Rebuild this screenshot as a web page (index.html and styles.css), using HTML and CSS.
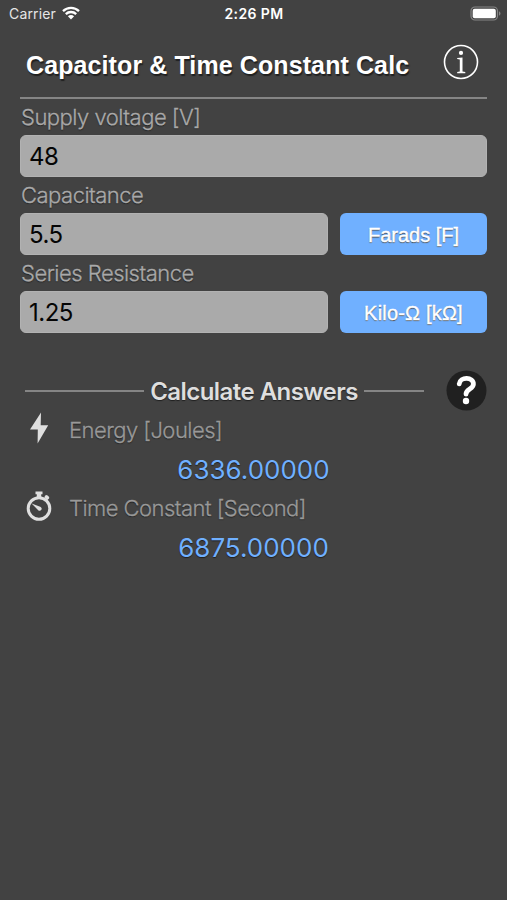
FILE: index.html
```html
<!DOCTYPE html>
<html lang="en">
<head>
  <meta charset="UTF-8">
  <title>Capacitor &amp; Time Constant Calc</title>
  <link rel="stylesheet" href="styles.css">
</head>
<body>
  <div class="status-bar">
    <div class="carrier">
      <span>Carrier</span>
      <svg class="wifi" width="18" height="14" viewBox="0 0 18 14">
        <path d="M1 5.2a11.5 11.5 0 0 1 16 0M3.8 8.1a7.5 7.5 0 0 1 10.4 0" fill="none" stroke="#fff" stroke-width="2.3"/>
        <path d="M5.9 10.3a4.6 4.6 0 0 1 6.2 0L9 13.5z" fill="#fff"/>
      </svg>
    </div>
    <span class="time">2:26 PM</span>
    <svg class="battery" width="31" height="15" viewBox="0 0 31 15">
      <rect x="1" y="1" width="26.5" height="13" rx="4" fill="none" stroke="#858585" stroke-width="1.2"/>
      <rect x="2.7" y="2.7" width="23.1" height="9.6" rx="2" fill="#fff"/>
      <path d="M29 5.3c2 .8 2 3.6 0 4.4z" fill="#858585"/>
    </svg>
  </div>

  <header class="header">
    <h1>Capacitor &amp; Time Constant Calc</h1>
    <svg class="info" width="36" height="36" viewBox="0 0 36 36">
      <circle cx="18" cy="18" r="16.5" fill="none" stroke="#fff" stroke-width="1.6"/>
      <circle cx="18" cy="8.9" r="2.1" fill="#fff"/>
      <path d="M14.2 14.1l5.3-.7v14.1l2.8.6v1.2h-8.1v-1.2l2.6-.6V15.4l-2.6-.3z" fill="#fff"/>
    </svg>
  </header>

  <form class="inputs">
    <label for="voltage">Supply voltage [V]</label>
    <div class="row">
      <input id="voltage" type="text" value="48">
    </div>
    <label for="capacitance">Capacitance</label>
    <div class="row">
      <input id="capacitance" type="text" value="5.5">
      <button type="button" class="unit">Farads [F]</button>
    </div>
    <label for="resistance">Series Resistance</label>
    <div class="row">
      <input id="resistance" type="text" value="1.25">
      <button type="button" class="unit ohms">Kilo-Ω [kΩ]</button>
    </div>
  </form>

  <div class="calculate">
    <span class="line line-left"></span>
    <h2>Calculate Answers</h2>
    <span class="line line-right"></span>
    <svg class="help" width="41" height="41" viewBox="0 0 41 41">
      <circle cx="20.5" cy="20.5" r="20" fill="#202020"/>
      <path d="M13.2 13.9c.8-7.6 14.4-7.2 14.2.2-.1 5.1-7.2 4.8-7.4 10" fill="none" stroke="#fff" stroke-width="4.8" stroke-linecap="round"/>
      <circle cx="20" cy="31" r="3.2" fill="#fff"/>
    </svg>
  </div>

  <div class="answers">
    <div class="answer">
      <svg class="icon" width="26" height="34" viewBox="0 0 26 34">
        <path d="M15 1.5L4 18.5h7.8L11.6 32.5 22.2 14.2h-7.5z" fill="#dfdfdf"/>
      </svg>
      <span class="name">Energy [Joules]</span>
    </div>
    <div class="value">6336.00000</div>
    <div class="answer">
      <svg class="icon" width="26" height="34" viewBox="0 0 26 34">
        <circle cx="13" cy="19.5" r="10.8" fill="none" stroke="#dfdfdf" stroke-width="3"/>
        <path d="M9.5 2.5h7v2.8h-1.3V8h-4.4V5.3H9.5zM18.2 8.3l1.6-2.2 1.4.2 2 1.8-.1 1.5-1.7 1.5z" fill="#dfdfdf"/>
        <path d="M5.6 14.4l8.6 3.3c3.2 1.9.6 5.4-2 3.5z" fill="#dfdfdf"/>
      </svg>
      <span class="name">Time Constant [Second]</span>
    </div>
    <div class="value">6875.00000</div>
  </div>
</body>
</html>
```

FILE: styles.css
```css
* {
  box-sizing: border-box;
}
body {
  margin: 0;
  min-height: 900px;
  background-color: #424242;
  color: #fff;
  font-family: Inter, sans-serif;
}

/* Status bar */
.status-bar {
  display: grid;
  grid-template-columns: 1fr auto 1fr;
  align-items: center;
  height: 26px;
  padding: 0 6px 0 9px;
  font-size: 14px;
}
.carrier {
  display: flex;
  align-items: center;
  gap: 6px;
  color: #e6e6e6;
  letter-spacing: 0.15px;
}
.wifi {
  margin-top: -1px;
}
.time {
  margin-right: 2px;
  font-weight: 600;
  letter-spacing: 0.4px;
}
.battery {
  justify-self: end;
}

/* Header */
.header {
  display: flex;
  align-items: center;
  justify-content: space-between;
  height: 73px;
  margin: 0 20px;
  padding: 0 8px 0 6px;
  border-bottom: 2px solid #858585;
}
h1 {
  margin: 7px 0 0;
  font-family: "Liberation Sans", Arial, sans-serif;
  font-size: 25px;
  letter-spacing: 0.1px;
  white-space: nowrap;
  text-shadow: 1px 2px 1px #202020;
}

/* Inputs */
.inputs {
  margin: 0 20px;
}
label {
  display: block;
  height: 36px;
  padding-left: 1px;
  line-height: 37px;
  font-size: 22px;
  font-weight: 300;
  letter-spacing: -0.5px;
  color: #a9a9a9;
  -webkit-text-stroke: 0.3px #a9a9a9;
  text-shadow: 0 1px 1px #202020;
}
.row {
  display: flex;
  gap: 12px;
}
input {
  flex: 1;
  min-width: 0;
  height: 42px;
  padding: 0 8px;
  border: 1px solid #b2b2b2;
  border-radius: 6px;
  background-color: #aaa;
  color: #050505;
  font-family: Inter, sans-serif;
  font-size: 24px;
  letter-spacing: -0.5px;
}
.unit {
  width: 147px;
  height: 42px;
  padding: 2px 0 0;
  border: none;
  border-radius: 6px;
  background-color: #70b0ff;
  color: #fff;
  font-family: "Liberation Sans", Arial, sans-serif;
  font-size: 20px;
  -webkit-text-stroke: 0.4px #fff;
  text-shadow: 0 1px 1px #444;
}
.ohms {
  letter-spacing: 0.2px;
}

/* Calculate */
.calculate {
  display: flex;
  align-items: center;
  height: 41px;
  margin: 37px 20px 0 25px;
}
.line {
  height: 2px;
  background-color: #858585;
}
.line-left {
  width: 119px;
}
.line-right {
  width: 60px;
}
h2 {
  width: 220px;
  margin: 2px 0 0;
  text-align: center;
  font-size: 24px;
  font-weight: 600;
  letter-spacing: -0.55px;
  color: #dedede;
  white-space: nowrap;
  text-shadow: 0 1px 1px #202020;
}
.help {
  margin-left: auto;
}

/* Answers */
.answers {
  margin-top: -1px;
}
.answer {
  display: flex;
  align-items: center;
  gap: 17px;
  height: 39px;
  margin-left: 26px;
}
.icon {
  margin-top: -4px;
}
.name {
  font-size: 22px;
  font-weight: 300;
  letter-spacing: -0.53px;
  color: #999;
  -webkit-text-stroke: 0.3px #999;
  text-shadow: 0 1px 1px #202020;
}
.value {
  height: 39px;
  line-height: 41px;
  text-align: center;
  font-size: 26px;
  color: #70b0ff;
  text-shadow: 0 1px 1px #202020;
}
```
